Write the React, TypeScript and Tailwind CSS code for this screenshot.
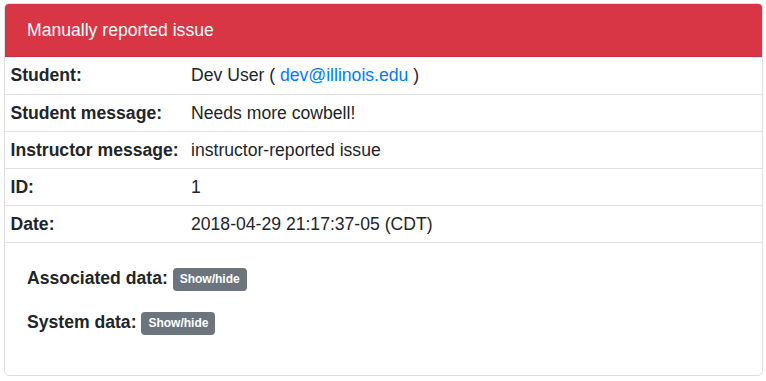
const rows = [
  { label: "Student:", value: "student" },
  { label: "Student message:", value: "Needs more cowbell!" },
  { label: "Instructor message:", value: "instructor-reported issue" },
  { label: "ID:", value: "1" },
  { label: "Date:", value: "2018-04-29 21:17:37-05 (CDT)" },
];

const ToggleButton = () => (
  <button className="rounded-[4px] bg-[#6c757d] px-[7px] py-[3px] text-[12px] font-bold leading-[17px] text-white align-middle">
    Show/hide
  </button>
);

export default function App() {
  return (
    <div className="min-h-screen bg-white pl-[4px] pr-[3px] pt-[3px] font-['Liberation_Sans',Arial,sans-serif] text-[17.6px] leading-[26.4px] text-[#212529]">
      <div className="h-[373px] overflow-hidden rounded-[5px] border border-[#dfdfdf] flex flex-col">
        {/* Header */}
        <div className="h-[53px] flex items-center bg-[#d83545] px-[22px] text-white border-b border-[#c9303f]">
          Manually reported issue
        </div>

        {rows.map((r, i) => (
          <div
            key={r.label}
            className={`flex h-[37px] items-center ${i > 0 ? "border-t border-[#dee2e6]" : ""}`}
          >
            <div className="w-[186px] shrink-0 whitespace-nowrap pl-[5.5px] font-bold">{r.label}</div>
            <div>
              {r.value === "student" ? (
                <>
                  Dev User ({" "}
                  <a href="#" className="text-[#007bff]">
                    dev@illinois.edu
                  </a>{" "}
                  )
                </>
              ) : (
                r.value
              )}
            </div>
          </div>
        ))}

        <div className="border-t border-[#dee2e6] px-[22px] pt-[22px]">
          <p className="mb-[17.6px]">
            <strong>Associated data:</strong> <ToggleButton />
          </p>
          <p className="mb-[17.6px]">
            <strong>System data:</strong> <ToggleButton />
          </p>
        </div>
      </div>
    </div>
  );
}
